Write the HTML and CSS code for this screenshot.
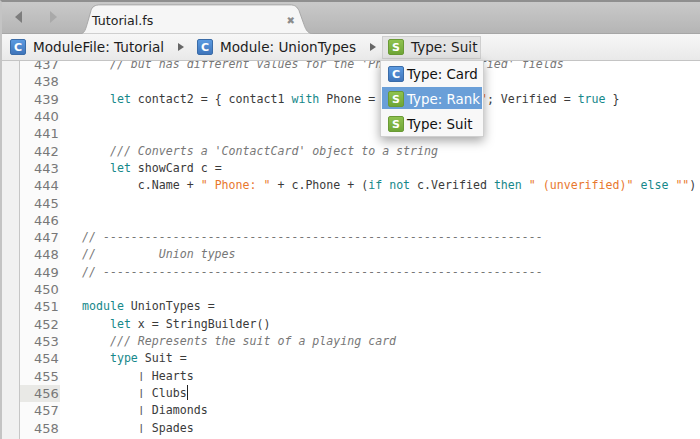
FILE: index.html
```html
<!DOCTYPE html>
<html lang="en">
<head>
<meta charset="utf-8">
<title>Tutorial.fs</title>
<link rel="stylesheet" href="styles.css">
</head>
<body>
<div class="window">
  <header class="tabbar">
    <div class="nav">
      <svg class="nav-arrow" width="10" height="14" viewBox="0 0 10 14"><path d="M8 1v12L1 7z" fill="#7d7d7d"/></svg>
      <svg class="nav-arrow" width="10" height="14" viewBox="0 0 10 14"><path d="M2 1v12l7-6z" fill="#a9a9a9"/></svg>
    </div>
    <div class="tab">
      <svg class="tab-shape" width="240" height="33" viewBox="0 0 240 33" preserveAspectRatio="none"><path d="M0 33h1c5 0 6-3 8-10l4-15c1-4 4-6 9-6h190c5 0 7 2 9 6l5 15c2 6 4 10 10 10h4z" fill="#f6f6f6" stroke="#a6a6a6"/></svg>
      <span class="tab-title">Tutorial.fs</span>
      <span class="tab-close">✖</span>
    </div>
  </header>
  <nav class="crumbs">
    <span class="crumb"><i class="badge badge-c">C</i>ModuleFile: Tutorial</span>
    <svg class="sep" width="8" height="10" viewBox="0 0 8 10"><path d="M1 1v8l6-4z" fill="#666"/></svg>
    <span class="crumb"><i class="badge badge-c">C</i>Module: UnionTypes</span>
    <svg class="sep" width="8" height="10" viewBox="0 0 8 10"><path d="M1 1v8l6-4z" fill="#666"/></svg>
    <span class="crumb crumb-active"><i class="badge badge-s">S</i>Type: Suit</span>
  </nav>
  <main class="editor">
    <div class="strip"></div>
    <div class="gutter">
      <div>437</div><div>438</div><div>439</div><div>440</div><div>441</div><div>442</div><div>443</div><div>444</div><div>445</div><div>446</div><div>447</div><div>448</div><div>449</div><div>450</div><div>451</div><div>452</div><div>453</div><div>454</div><div>455</div><div class="current">456</div><div>457</div><div>458</div>
    </div>
<pre class="code"><span class="cm">    // but has different values for the 'Phone' and 'Verified' fields</span>

    <span class="kw">let</span> contact2 = { contact1 <span class="kw">with</span> Phone = <span class="st">"(206)555-0112"</span>; Verified = <span class="kw">true</span> }


    <span class="cm">/// Converts a 'ContactCard' object to a string</span>
    <span class="kw">let</span> showCard c =
        c.Name + <span class="st">" Phone: "</span> + c.Phone + (<span class="kw">if not</span> c.Verified <span class="kw">then</span> <span class="st">" (unverified)"</span> <span class="kw">else</span> <span class="st">""</span>)


<span class="cm">// ---------------------------------------------------------------</span>
<span class="cm">//         Union types</span>
<span class="cm">// ---------------------------------------------------------------</span>

<span class="kw">module</span> UnionTypes =
    <span class="kw">let</span> x = StringBuilder()
    <span class="cm">/// Represents the suit of a playing card</span>
    <span class="kw">type</span> Suit =
        <span class="pipe">|</span> Hearts
        <span class="pipe">|</span> Clubs<span class="caret"></span>
        <span class="pipe">|</span> Diamonds
        <span class="pipe">|</span> Spades</pre>
  </main>
  <ul class="popup">
    <li class="item"><i class="badge badge-c">C</i>Type: Card</li>
    <li class="item item-selected"><i class="badge badge-s">S</i>Type: Rank</li>
    <li class="item"><i class="badge badge-s">S</i>Type: Suit</li>
  </ul>
</div>
</body>
</html>
```
FILE: styles.css
```css
* { box-sizing: border-box; }
html, body { margin: 0; padding: 0; }
body { width: 700px; height: 439px; overflow: hidden; background: #fff; }
.window {
  position: relative;
  width: 700px;
  height: 439px;
  display: flex;
  flex-direction: column;
  overflow: hidden;
  border-top: 2px solid #8f8f8f;
  border-left: 2px solid #c4c4c4;
  font-family: "DejaVu Sans", "Liberation Sans", sans-serif;
}
.tabbar {
  flex: 0 0 32px;
  display: flex;
  align-items: flex-end;
  background: linear-gradient(#c9c9c9, #b5b5b5);
  border-bottom: 1px solid #a6a6a6;
}
.nav {
  width: 76px;
  height: 100%;
  display: flex;
  align-items: center;
  gap: 24px;
  padding: 0 0 1px 12px;
}
.nav-arrow { display: block; }
.tab {
  position: relative;
  width: 240px;
  height: 31px;
  margin-bottom: -1px;
  display: flex;
  align-items: center;
  justify-content: space-between;
  padding: 3px 23px 0 14px;
}
.tab-shape { position: absolute; left: 0; top: 0; width: 100%; height: 100%; }
.tab-title, .tab-close { position: relative; }
.tab-title { font-size: 12.6px; color: #222; }
.tab-close { font-size: 10px; color: #8c8c8c; }
.crumbs {
  flex: 0 0 27px;
  display: flex;
  align-items: center;
  padding-left: 8px;
  background: linear-gradient(#f7f7f7, #e9e9e9);
  border-bottom: 1px solid #c4c4c4;
}
.crumb {
  display: flex;
  align-items: center;
  gap: 7px;
  height: 23px;
  font-size: 13.6px;
  color: #1c1c1c;
}
.crumb-active {
  padding: 0 3px 0 5px;
  background: #e4e4e4;
  border: 1px solid #cfcfcf;
}
.sep { margin: 0 12px 0 13px; }
.sep + .crumb-active { margin-left: -7px; }
.badge {
  flex: none;
  width: 16px;
  height: 16px;
  border-radius: 2px;
  display: inline-flex;
  align-items: center;
  justify-content: center;
  font-family: "DejaVu Sans", sans-serif;
  font-style: normal;
  font-weight: 700;
  font-size: 11px;
  color: #fff;
}
.badge-c { background: linear-gradient(#5b9ae0, #3f75bb); border: 1px solid #3a6ca8; }
.badge-s { background: linear-gradient(#8fc24f, #6fa637); border: 1px solid #6a9a35; }
.editor {
  flex: 1;
  display: flex;
  min-height: 0;
  overflow: hidden;
  background: #fff;
}
.strip { flex: 0 0 18px; background: #f1f1f1; border-right: 1px solid #c6c6c6; }
.gutter {
  flex: 0 0 40px;
  margin-top: -5px;
  background: #fbfbfb;
  font-family: "DejaVu Sans", sans-serif;
  font-size: 13px;
  line-height: 17.32px;
  color: #777;
}
.gutter div { padding-left: 14px; }
.gutter .current { background: #e9e9e6; }
.code {
  margin: -5px 0 0 0;
  padding-left: 22px;
  font-family: "DejaVu Sans Mono", monospace;
  font-size: 11.6px;
  line-height: 17.32px;
  color: #3a3a3a;
}
.cm { color: #777; font-style: italic; }
.kw { color: #16888a; }
.st { color: #e8772e; }
.pipe { display: inline-block; line-height: 1; transform: scaleY(0.8); color: #555; }
.caret { display: inline-block; width: 1px; height: 15px; background: #222; vertical-align: -3px; }
.popup {
  position: absolute;
  left: 378px;
  top: 58px;
  width: 104px;
  margin: 0;
  padding: 1px 1px 2px;
  list-style: none;
  background: #f8f8f8;
  border: 1px solid #cfcfcf;
  box-shadow: 0 4px 10px rgba(0, 0, 0, 0.35);
}
.item {
  display: flex;
  align-items: center;
  gap: 3px;
  height: 22px;
  margin-bottom: 3px;
  padding: 2px 0 0 6px;
  font-size: 13.4px;
  color: #111;
}
.item:last-child { margin-bottom: 0; }
.item-selected { background: #6a9fd8; color: #fff; }
```
